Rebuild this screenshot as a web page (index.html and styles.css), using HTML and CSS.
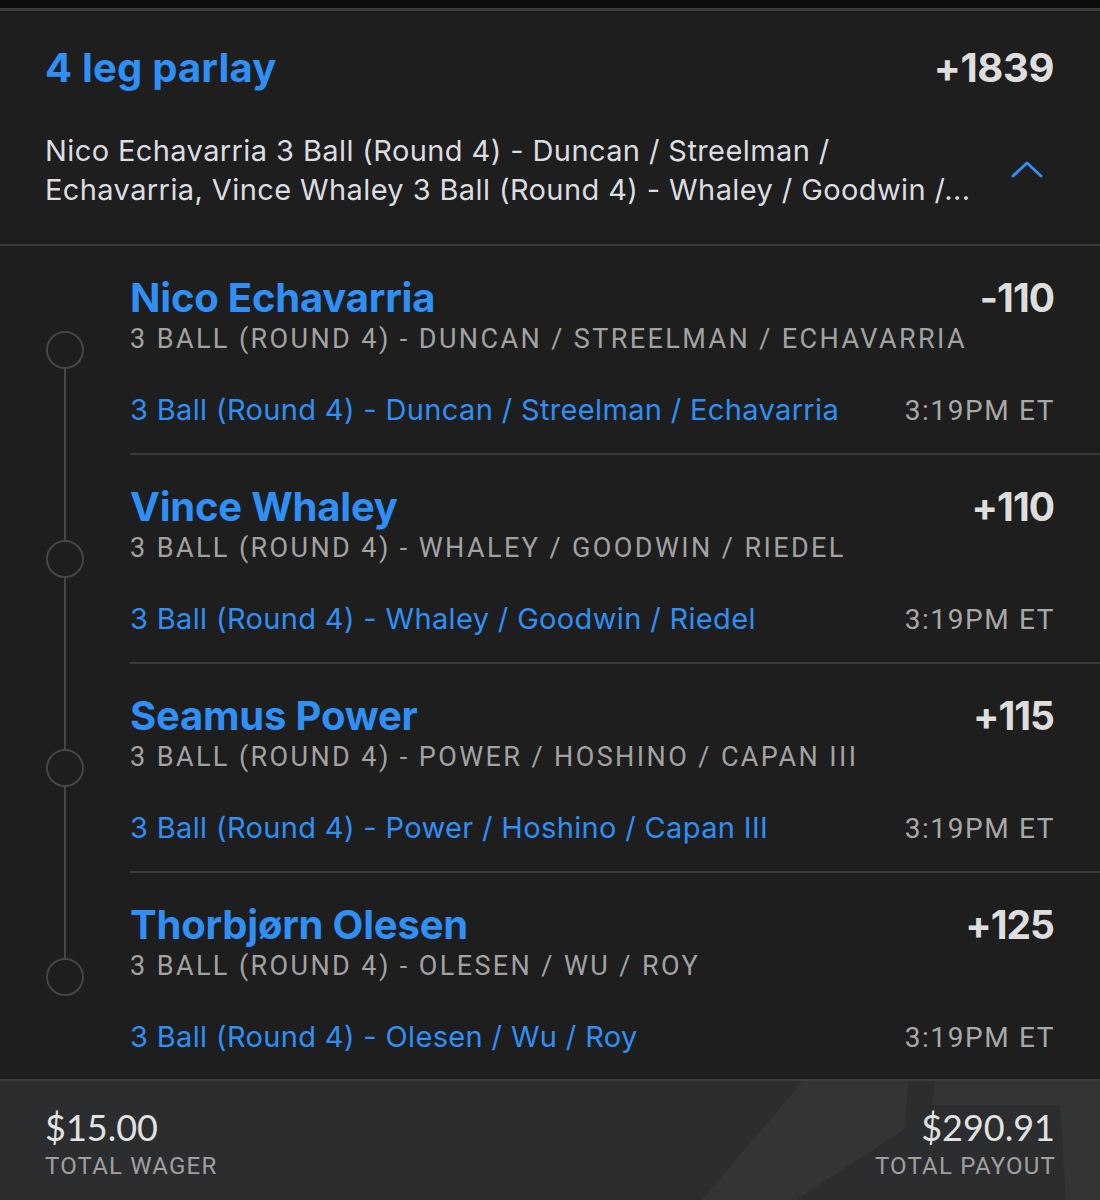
FILE: index.html
```html
<!DOCTYPE html>
<html>
<head>
<meta charset="utf-8">
<link rel="stylesheet" href="styles.css">
</head>
<body>
<div class="topbar"></div>
<div class="panel">
  <header class="summary">
    <div class="summary-row">
      <h1 class="parlay-title">4 leg parlay</h1>
      <div class="parlay-odds">+1839</div>
    </div>
    <div class="desc-row">
      <p class="desc">Nico Echavarria 3 Ball (Round 4) - Duncan / Streelman /<br>Echavarria, Vince Whaley 3 Ball (Round 4) - Whaley / Goodwin /...</p>
      <svg class="chevron" width="34" height="20" viewBox="0 0 34 20"><polyline points="3,16 17,3 31,16" fill="none" stroke="#2f8ff5" stroke-width="3" stroke-linecap="round" stroke-linejoin="round"/></svg>
    </div>
  </header>

  <section class="legs">
    <div class="leg first">
      <div class="rail"><span class="seg-top"></span><span class="node"></span><span class="seg-bottom"></span></div>
      <div class="leg-body">
        <div class="leg-row"><span class="leg-name">Nico Echavarria</span><span class="leg-odds">-110</span></div>
        <div class="leg-sub">3 Ball (Round 4) - Duncan / Streelman / Echavarria</div>
        <div class="leg-row market-row"><span class="market">3 Ball (Round 4) - Duncan / Streelman / Echavarria</span><span class="time">3:19PM ET</span></div>
      </div>
    </div>
    <div class="leg">
      <div class="rail"><span class="seg-top"></span><span class="node"></span><span class="seg-bottom"></span></div>
      <div class="leg-body">
        <div class="leg-row"><span class="leg-name">Vince Whaley</span><span class="leg-odds">+110</span></div>
        <div class="leg-sub">3 Ball (Round 4) - Whaley / Goodwin / Riedel</div>
        <div class="leg-row market-row"><span class="market">3 Ball (Round 4) - Whaley / Goodwin / Riedel</span><span class="time">3:19PM ET</span></div>
      </div>
    </div>
    <div class="leg">
      <div class="rail"><span class="seg-top"></span><span class="node"></span><span class="seg-bottom"></span></div>
      <div class="leg-body">
        <div class="leg-row"><span class="leg-name">Seamus Power</span><span class="leg-odds">+115</span></div>
        <div class="leg-sub">3 Ball (Round 4) - Power / Hoshino / Capan III</div>
        <div class="leg-row market-row"><span class="market">3 Ball (Round 4) - Power / Hoshino / Capan III</span><span class="time">3:19PM ET</span></div>
      </div>
    </div>
    <div class="leg last">
      <div class="rail"><span class="seg-top"></span><span class="node"></span><span class="seg-bottom"></span></div>
      <div class="leg-body">
        <div class="leg-row"><span class="leg-name">Thorbjørn Olesen</span><span class="leg-odds">+125</span></div>
        <div class="leg-sub">3 Ball (Round 4) - Olesen / Wu / Roy</div>
        <div class="leg-row market-row"><span class="market">3 Ball (Round 4) - Olesen / Wu / Roy</span><span class="time">3:19PM ET</span></div>
      </div>
    </div>
  </section>

  <footer class="totals">
    <svg class="bg-logo" width="1100" height="121" viewBox="0 0 1100 121" preserveAspectRatio="none">
      <polygon points="700,121 803,0 1100,0 1100,121" fill="#333436"/>
      <polygon points="908,0 935,0 932,24 1060,24 1066,121 793,121 905,48" fill="#2c2d2f"/>
    </svg>
    <div class="total">
      <div class="amount">$15.00</div>
      <div class="label">Total Wager</div>
    </div>
    <div class="total right">
      <div class="amount">$290.91</div>
      <div class="label">Total Payout</div>
    </div>
  </footer>
</div>
</body>
</html>
```
FILE: styles.css
```css
html, body {
  margin: 0;
  padding: 0;
  background: #0c0c0c;
}
body {
  width: 1100px;
  height: 1200px;
  overflow: hidden;
  font-family: "Inter", "Lato", sans-serif;
}
.topbar {
  height: 8px;
  background: #0c0c0c;
}
.panel {
  background: #1e1e1e;
  border-top: 3px solid #3b3b3b;
}
.summary {
  padding: 33px 46px 0 45px;
  border-bottom: 2px solid #3a3a3a;
  height: 235px;
  box-sizing: border-box;
}
.summary-row {
  display: flex;
  justify-content: space-between;
  align-items: baseline;
}
.parlay-title {
  margin: 0;
  font-size: 40px;
  line-height: 48px;
  font-weight: 700;
  color: #2f8ff5;
  letter-spacing: 0.2px;
}
.parlay-odds {
  font-size: 40px;
  line-height: 48px;
  font-weight: 700;
  color: #dedede;
  letter-spacing: -0.4px;
}
.desc-row {
  display: flex;
  align-items: center;
  justify-content: space-between;
  margin-top: 39px;
}
.desc {
  margin: 0;
  white-space: nowrap;
  font-size: 29px;
  line-height: 39px;
  color: #dcdde0;
  letter-spacing: 0.4px;
}
.chevron {
  margin-right: 10px;
}
.leg {
  display: grid;
  grid-template-columns: 130px 1fr;
}
.rail {
  display: flex;
  flex-direction: column;
  align-items: center;
}
.seg-top {
  width: 2px;
  height: 85px;
  background: #464646;
}
.seg-bottom {
  width: 2px;
  flex: 1;
  background: #464646;
}
.first .seg-top, .last .seg-bottom {
  background: transparent;
}
.node {
  width: 34px;
  height: 34px;
  border: 2px solid #464646;
  border-radius: 50%;
}
.leg-body {
  height: 209px;
  box-sizing: border-box;
  padding: 28px 46px 0 0;
  border-bottom: 2px solid #3a3a3a;
}
.last .leg-body {
  border-bottom: none;
  height: 206px;
}
.leg-row {
  display: flex;
  justify-content: space-between;
  align-items: baseline;
}
.leg-name {
  font-size: 40px;
  line-height: 48px;
  font-weight: 700;
  color: #2f8ff5;
  letter-spacing: -0.2px;
}
.leg-odds {
  font-size: 39px;
  line-height: 48px;
  font-weight: 700;
  color: #dedede;
  letter-spacing: -1px;
}
.leg-sub {
  font-family: "Roboto", "Noto Sans", sans-serif;
  text-transform: uppercase;
  font-size: 27px;
  line-height: 34px;
  letter-spacing: 2.4px;
  color: #a2a2a2;
}
.market-row {
  margin-top: 36px;
}
.market {
  font-size: 29px;
  line-height: 36px;
  color: #2f8ff5;
  letter-spacing: 0.35px;
}
.time {
  font-family: "Roboto", "Noto Sans", sans-serif;
  font-size: 28px;
  line-height: 36px;
  letter-spacing: 1.6px;
  color: #a8a8a8;
  margin-right: -1px;
}
.totals {
  position: relative;
  display: flex;
  justify-content: space-between;
  height: 121px;
  box-sizing: border-box;
  padding: 26px 45px 0 45px;
  background: #2c2d2f;
  border-top: 2px solid #3c3c3c;
  overflow: hidden;
}
.bg-logo {
  position: absolute;
  left: 0;
  top: 0;
}
.total {
  position: relative;
}
.total.right {
  text-align: right;
}
.amount {
  font-family: "Lato", sans-serif;
  font-size: 36px;
  line-height: 40px;
  font-weight: 400;
  color: #e2e2e2;
}
.label {
  font-family: "Roboto", "Noto Sans", sans-serif;
  text-transform: uppercase;
  font-size: 24px;
  line-height: 30px;
  letter-spacing: 1.2px;
  color: #a0a0a0;
  margin-top: 4px;
}
.right .label {
  margin-right: -1px;
}
```
